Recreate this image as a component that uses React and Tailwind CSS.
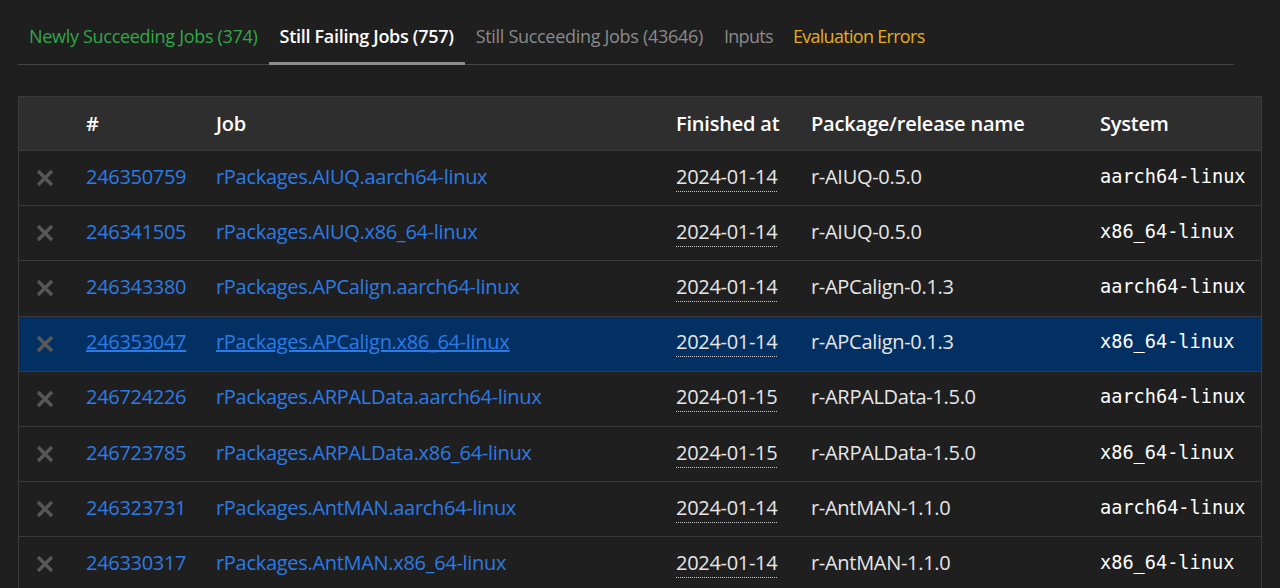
import { useState } from "react";

const rows = [
  { id: "246350759", job: "rPackages.AIUQ.aarch64-linux", date: "2024-01-14", pkg: "r-AIUQ-0.5.0", sys: "aarch64-linux" },
  { id: "246341505", job: "rPackages.AIUQ.x86_64-linux", date: "2024-01-14", pkg: "r-AIUQ-0.5.0", sys: "x86_64-linux" },
  { id: "246343380", job: "rPackages.APCalign.aarch64-linux", date: "2024-01-14", pkg: "r-APCalign-0.1.3", sys: "aarch64-linux" },
  { id: "246353047", job: "rPackages.APCalign.x86_64-linux", date: "2024-01-14", pkg: "r-APCalign-0.1.3", sys: "x86_64-linux" },
  { id: "246724226", job: "rPackages.ARPALData.aarch64-linux", date: "2024-01-15", pkg: "r-ARPALData-1.5.0", sys: "aarch64-linux" },
  { id: "246723785", job: "rPackages.ARPALData.x86_64-linux", date: "2024-01-15", pkg: "r-ARPALData-1.5.0", sys: "x86_64-linux" },
  { id: "246323731", job: "rPackages.AntMAN.aarch64-linux", date: "2024-01-14", pkg: "r-AntMAN-1.1.0", sys: "aarch64-linux" },
  { id: "246330317", job: "rPackages.AntMAN.x86_64-linux", date: "2024-01-14", pkg: "r-AntMAN-1.1.0", sys: "x86_64-linux" },
];

function Cross() {
  // failed build marker
  return (
    <svg viewBox="0 0 20 20" className="w-[20px] h-[20px]">
      <path d="M3 3L17 17M17 3L3 17" stroke="#575757" strokeWidth="3.4" strokeLinecap="butt" />
    </svg>
  );
}

export default function App() {
  const [hover] = useState("246353047");

  return (
    <div className="min-h-screen bg-[#1f1f1f] text-[#e6e6e6] text-[18px] overflow-hidden" style={{ fontFamily: "'Open Sans', 'Noto Sans', sans-serif" }}>
      <div className="pl-[18px] pr-[46px] pt-[23px]">
        <div className="flex border-b border-[#444444]">
          <div className="px-[11px] pb-[14px] text-[#2fa84a] tracking-[-0.3px]">Newly Succeeding Jobs (374)</div>
          <div className="px-[11px] pb-[11px] text-white font-semibold border-b-[3px] border-[#8c8c8c] -mb-px tracking-[-0.3px]">Still Failing Jobs (757)</div>
          <div className="px-[11px] pb-[14px] text-[#8a8a8a] tracking-[-0.3px]">Still Succeeding Jobs (43646)</div>
          <div className="px-[10px] pb-[14px] text-[#8a8a8a] tracking-[-0.7px]">Inputs</div>
          <div className="px-[10px] pb-[14px] text-[#e6ad1c] tracking-[-0.7px]">Evaluation Errors</div>
        </div>
      </div>

      <div className="pl-[18px] pr-[18px] mt-[31px] text-[20px]">
        <div className="border border-[#3a3a3a] border-b-0">
          <div className="grid grid-cols-[67px_130px_460px_135px_289px_1fr] h-[53px] items-center bg-[#2e2e2e] font-semibold text-white tracking-[-0.2px]">
            <div></div>
            <div>#</div>
            <div>Job</div>
            <div>Finished at</div>
            <div>Package/release name</div>
            <div>System</div>
          </div>
          {rows.map((r) => (
            <div
              key={r.id}
              className={
                "grid grid-cols-[67px_130px_460px_135px_289px_1fr] h-[55.2px] pb-[3px] items-center border-t border-[#3a3a3a] tracking-[-0.3px] " +
                (r.id === hover ? "bg-[#033063]" : "bg-[#1f1f1f]")
              }
            >
              <div className="pl-[16px] pt-[3px] flex items-center">
                <Cross />
              </div>
              <div>
                <a className={"text-[#2c7be5] " + (r.id === hover ? "underline" : "")}>{r.id}</a>
              </div>
              <div>
                <a className={"text-[#2c7be5] " + (r.id === hover ? "underline" : "")}>{r.job}</a>
              </div>
              <div>
                <span className="border-b border-dotted border-[#cccccc] pb-[1px]">{r.date}</span>
              </div>
              <div>{r.pkg}</div>
              <div className="tracking-normal text-[18.6px] text-white" style={{ fontFamily: "'DejaVu Sans Mono', monospace" }}>{r.sys}</div>
            </div>
          ))}
        </div>
      </div>
    </div>
  );
}
